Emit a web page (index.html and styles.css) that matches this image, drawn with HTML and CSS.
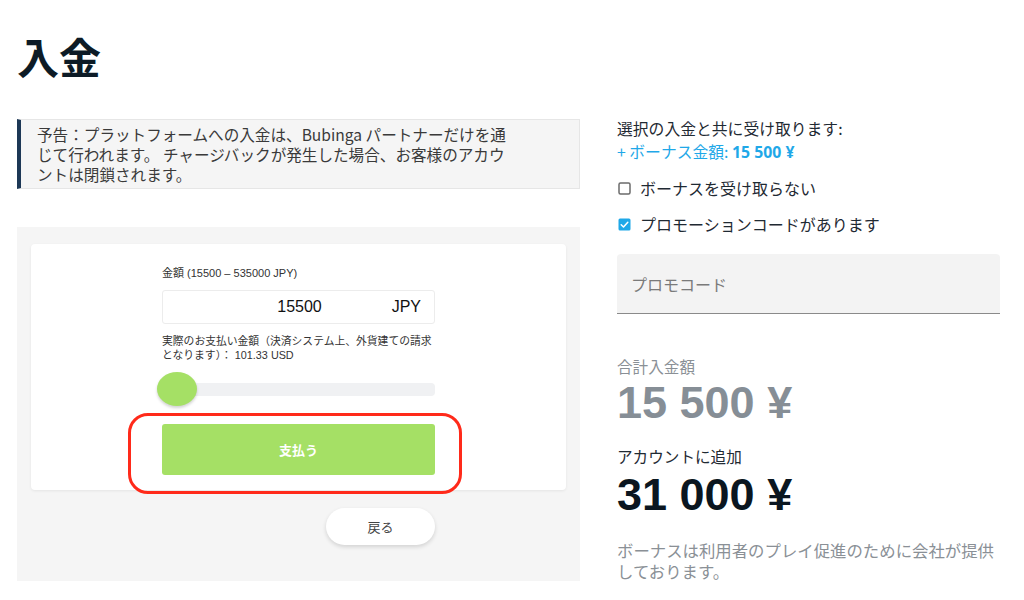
FILE: index.html
```html
<!DOCTYPE html>
<html lang="ja">
<head>
<meta charset="utf-8">
<title>入金</title>
<link rel="stylesheet" href="styles.css">
</head>
<body>
<div class="page">
  <h1 class="title">入金</h1>
  <div class="columns">
    <div class="left">
      <div class="notice">
        <p>予告：プラットフォームへの入金は、Bubinga パートナーだけを通じて行われます。 チャージバックが発生した場合、お客様のアカウントは閉鎖されます。</p>
      </div>
      <div class="panel">
        <div class="card">
          <div class="form">
            <div class="label">金額 (15500 – 535000 JPY)</div>
            <div class="amount-input">
              <span class="amount">15500</span>
              <span class="currency">JPY</span>
            </div>
            <div class="desc">実際のお支払い金額（決済システム上、外貨建ての請求となります）： 101.33 USD</div>
            <div class="slider"><span class="thumb"></span></div>
            <button class="pay">支払う</button>
          </div>
        </div>
        <div class="back-row">
          <button class="back">戻る</button>
        </div>
        <div class="highlight"></div>
      </div>
    </div>
    <div class="right">
      <div class="receive">選択の入金と共に受け取ります:</div>
      <div class="bonus">+ ボーナス金額: <b>15 500 ¥</b></div>
      <label class="check first">
        <svg class="box" width="13" height="13" viewBox="0 0 13 13"><rect x="1" y="1" width="11" height="11" rx="1.5" fill="#fff" stroke="#6b6b6b" stroke-width="1.5"/></svg>
        <span>ボーナスを受け取らない</span>
      </label>
      <label class="check">
        <svg class="box" width="13" height="13" viewBox="0 0 13 13"><rect x="0.5" y="0.5" width="12" height="12" rx="1.5" fill="#1fa8e8"/><path d="M3.2 6.8 L5.5 9 L9.8 4.2" fill="none" stroke="#fff" stroke-width="1.5" stroke-linecap="round" stroke-linejoin="round"/></svg>
        <span>プロモーションコードがあります</span>
      </label>
      <div class="promo">プロモコード</div>
      <div class="sum-label">合計入金額</div>
      <div class="sum gray">15 500 ¥</div>
      <div class="add-label">アカウントに追加</div>
      <div class="sum dark">31 000 ¥</div>
      <p class="note">ボーナスは利用者のプレイ促進のために会社が提供しております。</p>
    </div>
  </div>
</div>
</body>
</html>
```

FILE: styles.css
```css
* { box-sizing: border-box; }
html, body { margin: 0; padding: 0; background: #fff; }
body {
  font-family: "Noto Sans CJK JP", "Noto Sans", sans-serif;
  color: #1f2a33;
}
.page { padding: 31px 17px 0 17px; }
.title {
  margin: 0;
  font-size: 42px;
  line-height: 50px;
  font-weight: 700;
  color: #0d1b26;
}
.columns {
  display: flex;
  gap: 37px;
  margin-top: 38px;
}
.left { width: 563px; flex: none; }
.right { width: 383px; flex: none; margin-top: -2px; }

.notice {
  background: #f5f5f5;
  border: 1px solid #e6e6e6;
  border-left: 4px solid #1d3856;
  padding: 4px 20px 6px 16px;
  height: 70px;
}
.notice p {
  margin: 0;
  max-width: 476px;
  font-size: 15.6px;
  line-height: 20px;
  color: #3a3a3a;
}

.panel {
  position: relative;
  margin-top: 38px;
  background: #f5f5f5;
  padding: 17px 14px 36px 14px;
}
.card {
  background: #fff;
  border-radius: 4px;
  box-shadow: 0 1px 3px rgba(0,0,0,0.07);
  padding: 22px 0 15px 0;
}
.form {
  width: 273px;
  margin: 0 auto;
  font-family: "Liberation Sans", "Noto Sans CJK JP", sans-serif;
  color: #333;
}
.label { font-size: 11px; line-height: 14px; }
.amount-input {
  margin-top: 10px;
  height: 34px;
  border: 1px solid #ececec;
  border-radius: 3px;
  position: relative;
  display: flex;
  align-items: center;
  justify-content: center;
  font-size: 16px;
  color: #111;
}
.amount { padding-left: 2px; }
.currency { position: absolute; right: 13px; top: 7px; }
.desc {
  margin-top: 10px;
  font-size: 10.8px;
  line-height: 14px;
}
.slider {
  position: relative;
  margin-top: 21px;
  height: 13px;
  background: #f0f1f3;
  border-radius: 4px;
}
.thumb {
  position: absolute;
  left: -5px;
  top: -11px;
  width: 40px;
  height: 34px;
  border-radius: 50%;
  background: #a5e065;
  box-shadow: 0 2px 3px rgba(0,0,0,0.18);
}
.pay {
  display: block;
  width: 100%;
  margin-top: 28px;
  height: 51px;
  border: none;
  border-radius: 3px;
  background: #a5e065;
  color: #fff;
  font-family: "Noto Sans CJK JP", sans-serif;
  font-weight: 700;
  font-size: 13px;
}
.back-row {
  width: 273px;
  margin: 18px auto 0 auto;
  display: flex;
  justify-content: flex-end;
}
.back {
  width: 109px;
  height: 37px;
  border: none;
  border-radius: 19px;
  background: #fff;
  box-shadow: 0 2px 4px rgba(0,0,0,0.14);
  font-family: "Noto Sans CJK JP", sans-serif;
  font-size: 13px;
  color: #444;
}
.highlight {
  position: absolute;
  left: 111px;
  top: 186px;
  width: 334px;
  height: 81px;
  border: 3px solid #ff2a1a;
  border-radius: 20px;
  pointer-events: none;
}

.receive, .bonus {
  font-size: 15.8px;
  line-height: 23px;
}
.receive { color: #1f2a33; }
.bonus { color: #1fa8e8; }
.bonus b { font-family: "Noto Sans", sans-serif; font-weight: 700; }
.check {
  display: flex;
  align-items: center;
  gap: 9px;
  height: 24px;
  font-size: 16px;
  line-height: 24px;
  color: #1f2a33;
  margin-top: 12px;
}
.check.first { margin-top: 12px; }
.check .box { flex: none; margin-left: 1px; }
.promo {
  margin-top: 18px;
  height: 60px;
  background: #f3f3f3;
  border-bottom: 1px solid #8a8a8a;
  border-radius: 4px 4px 0 0;
  padding: 0 14px;
  display: flex;
  align-items: center;
  font-size: 16px;
  color: #7a7a7a;
}
.sum-label {
  margin-top: 40px;
  font-size: 15.6px;
  line-height: 24px;
  color: #8a9096;
}
.sum {
  font-family: "Liberation Sans", "Noto Sans", sans-serif;
  font-weight: 700;
  font-size: 45px;
  line-height: 50px;
}
.sum.gray { color: #868e96; }
.sum.dark { color: #0b1620; margin-top: 2px; }
.add-label {
  margin-top: 16px;
  font-size: 15.6px;
  line-height: 24px;
  color: #1f2a33;
}
.note {
  margin: 20px 0 0 0;
  font-size: 16.4px;
  line-height: 21px;
  color: #8a9096;
}
```
